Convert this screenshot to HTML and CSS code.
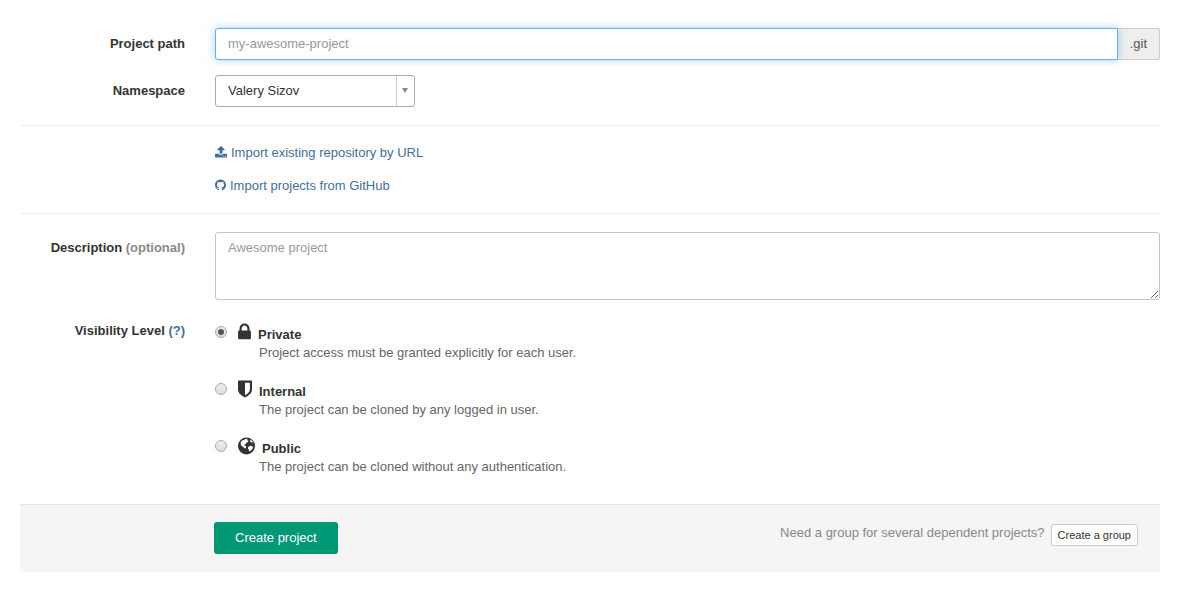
FILE: index.html
```html
<!DOCTYPE html>
<html lang="en">
<head>
<meta charset="utf-8">
<title>New project</title>
<link rel="stylesheet" href="styles.css">
</head>
<body>
<form class="project-form">
  <div class="row">
    <label class="row-label" for="path">Project path</label>
    <div class="input-group">
      <input class="control path-input" id="path" type="text" placeholder="my-awesome-project">
      <span class="addon">.git</span>
    </div>
  </div>
  <div class="row">
    <label class="row-label" for="namespace">Namespace</label>
    <div class="select-wrap">
      <select class="control namespace" id="namespace"><option>Valery Sizov</option></select>
      <span class="select-arrow"></span>
    </div>
  </div>
  <hr class="rule">
  <div class="imports">
    <a class="import-link" href="#url"><svg class="icon-upload" viewBox="64 0 1664 1792" aria-hidden="true"><path d="M1344 1472q0-26-19-45t-45-19-45 19-19 45 19 45 45 19 45-19 19-45zm256 0q0-26-19-45t-45-19-45 19-19 45 19 45 45 19 45-19 19-45zm128-224v320q0 40-28 68t-68 28h-1472q-40 0-68-28t-28-68v-320q0-40 28-68t68-28h427q21 56 70.500 92t110.500 36h256q61 0 110.500-36t70.500-92h427q40 0 68 28t28 68zm-325-648q-17 40-59 40h-256v448q0 26-19 45t-45 19h-256q-26 0-45-19t-19-45v-448h-256q-42 0-59-40-17-39 14-69l448-448q18-19 45-19t45 19l448 448q31 30 14 69z"/></svg>Import existing repository by URL</a>
    <a class="import-link" href="#github"><svg class="icon-github" viewBox="128 0 1536 1792" aria-hidden="true"><path d="M896 128q209 0 385.500 103t279.500 279.500 103 385.500q0 251-146.500 451.500t-378.500 277.500q-27 5-40-7t-13-30q0-3 .5-76.500t.5-134.500q0-97-52-142 57-6 102.500-18t94-39 81-66.500 53-105 20.500-150.500q0-119-79-206 37-91-8-204-28-9-81 11t-92 44l-38 24q-93-26-192-26t-192 26q-16-11-42.500-27t-83.500-38.500-85-13.500q-45 113-8 204-79 87-79 206 0 85 20.500 150t52.500 105 80.500 67 94 39 102.500 18q-39 36-49 103-21 10-45 15t-57 5-65.500-21.500-55.500-62.500q-19-32-48.500-52t-49.500-24l-20-3q-21 0-29 4.500t-5 11.500 9 14 13 12l7 5q22 10 43.500 38t31.500 51l10 23q13 38 44 61.500t67 30 69.500 7 55.500-3.500l23-4q0 38 .5 88.500t.5 54.500q0 18-13 30t-40 7q-232-77-378.500-277.500t-146.500-451.500q0-209 103-385.500t279.500-279.500 385.500-103z"/></svg>Import projects from GitHub</a>
  </div>
  <hr class="rule">
  <div class="row">
    <label class="row-label" for="description">Description <span class="light">(optional)</span></label>
    <textarea class="control description" id="description" placeholder="Awesome project"></textarea>
  </div>
  <div class="row visibility">
    <div class="row-label" id="visibility-label">Visibility Level <a href="#help">(?)</a></div>
    <div class="levels" role="radiogroup" aria-labelledby="visibility-label">
      <div class="level">
        <input class="radio" type="radio" name="level" id="private" checked>
        <label class="level-text" for="private">
          <span class="level-title"><svg class="icon-lock" viewBox="320 0 1152 1792" aria-hidden="true"><path d="M640 768h512v-192q0-106-75-181t-181-75-181 75-75 181v192zm832 96v576q0 40-28 68t-68 28h-960q-40 0-68-28t-28-68v-576q0-40 28-68t68-28h32v-192q0-184 132-316t316-132 316 132 132 316v192h32q40 0 68 28t28 68z"/></svg><strong>Private</strong></span>
          <span class="level-info">Project access must be granted explicitly for each user.</span>
        </label>
      </div>
      <div class="level">
        <input class="radio" type="radio" name="level" id="internal">
        <label class="level-text" for="internal">
          <span class="level-title"><svg class="icon-shield" viewBox="256 0 1280 1792" aria-hidden="true"><path d="M1344 960v-640h-448v1137q119-63 213-137 235-184 235-360zm192-768v768q0 86-33.500 170.500t-83 150-118 127.500-126.500 103-121 77.500-89.500 49.500-42.500 20q-12 6-26 6t-26-6q-16-7-42.500-20t-89.500-49.500-121-77.500-126.500-103-118-127.500-83-150-33.500-170.500v-768q0-26 19-45t45-19h1152q26 0 45 19t19 45z"/></svg><strong>Internal</strong></span>
          <span class="level-info">The project can be cloned by any logged in user.</span>
        </label>
      </div>
      <div class="level">
        <input class="radio" type="radio" name="level" id="public">
        <label class="level-text" for="public">
          <span class="level-title"><svg class="icon-globe" viewBox="0 0 17 20" aria-hidden="true"><circle cx="8.500" cy="10" r="8.500"/><path class="land" d="M2.500 7 3.500 5 5.200 4 7 3.600 8 2.800 9.600 3 9 4.200 10.300 4.600 10.200 6 8.600 6.400 8 7.800 6.600 8.400 6.400 9.500 7.600 9.800 8.200 11.200 7.800 12.500 6 11.800 4.500 10.600 3.200 9.400zM12 3.400 14 4.700 15 6.400 13.400 6.600 12.200 5.400zM10.400 10.800 12.400 9.800 14.200 10.400 15.200 10.200 14.600 12.600 13 14.500 11.200 15.600 10.800 13.600 9.800 12.400z"/></svg><strong>Public</strong></span>
          <span class="level-info">The project can be cloned without any authentication.</span>
        </label>
      </div>
    </div>
  </div>
  <div class="actions">
    <button class="btn-create" type="submit">Create project</button>
    <div class="group-hint">
      <span>Need a group for several dependent projects?</span>
      <button class="btn-group" type="button">Create a group</button>
    </div>
  </div>
</form>
</body>
</html>
```
FILE: styles.css
```css
* { box-sizing: border-box; }
body {
  margin: 0;
  background: #fff;
  color: #333;
  font: 13px/18px "Liberation Sans", Arial, sans-serif;
}
a { color: #446e9b; text-decoration: none; }
svg { fill: currentColor; flex: none; }
.project-form { padding: 28px 25px 26px 20px; }
.row {
  display: grid;
  grid-template-columns: 165px minmax(0, 1fr);
  column-gap: 30px;
  margin-bottom: 15px;
}
.row-label { padding-top: 7px; text-align: right; font-weight: bold; }
.light { color: #888; }
.control {
  height: 32px;
  padding: 6px 12px;
  border: 1px solid #c4c4c4;
  border-radius: 3px;
  background: #fff;
  color: #333;
  font: inherit;
  outline: 0;
}
.control::placeholder { color: #999; }
.input-group { display: flex; }
.path-input {
  flex: 1;
  min-width: 0;
  padding: 5px 12px 7px;
  border-color: #66afe9;
  border-radius: 3px 0 0 3px;
  box-shadow: 0 0 8px rgba(102, 175, 233, 0.6);
  z-index: 1;
}
.addon {
  padding: 6px 12px;
  border: 1px solid #ccc;
  border-left: 0;
  border-radius: 0 3px 3px 0;
  background: #eee;
  color: #555;
}
.select-wrap { display: grid; width: 200px; }
.namespace { grid-area: 1 / 1; width: 100%; padding: 0 12px; border-color: #aaa; appearance: none; }
.select-arrow {
  grid-area: 1 / 1;
  display: flex;
  justify-self: end;
  align-items: center;
  justify-content: center;
  width: 19px;
  margin: 1px 0;
  padding: 0 2px 2px 0;
  border-left: 1px solid #ccc;
  pointer-events: none;
}
.select-arrow::before {
  content: "";
  border: 3px solid transparent;
  border-top: 5px solid #888;
  border-bottom: 0;
}
.rule { margin: 18px 0; border: 0; border-top: 1px solid #eee; }
.imports {
  display: flex;
  flex-direction: column;
  align-items: flex-start;
  gap: 15px;
  margin-left: 195px;
}
.import-link { display: flex; align-items: flex-start; gap: 4px; }
.icon-upload { width: 12px; height: 16px; }
.icon-github { width: 11px; height: 16px; }
.description { display: block; width: 100%; height: 68px; resize: vertical; }
.levels { display: grid; gap: 17px; padding-top: 7px; }
.level { display: flex; gap: 11px; }
.radio {
  appearance: none;
  flex: none;
  display: grid;
  place-items: center;
  width: 12px;
  height: 12px;
  margin: 4px 0 0;
  border: 1px solid #aaa;
  border-radius: 50%;
  background: linear-gradient(#eee, #ddd);
}
.radio:checked::before {
  content: "";
  width: 6px;
  height: 6px;
  border-radius: 50%;
  background: #555;
}
.level-title { display: flex; align-items: flex-start; gap: 7px; height: 22px; }
.level-title strong { padding-top: 4px; }
.icon-lock { width: 13px; height: 20px; }
.icon-shield { width: 14px; height: 20px; }
.icon-globe { width: 17px; height: 20px; }
.land { fill: #fff; }
.level-info { display: block; padding-left: 21px; color: #666; }
.actions {
  display: flex;
  flex-wrap: wrap;
  justify-content: space-between;
  align-items: flex-start;
  margin-top: 28px;
  padding: 17px 22px 18px 194px;
  border-top: 1px solid #e5e5e5;
  background: #f5f5f5;
}
.btn-create {
  height: 32px;
  padding: 0 21px;
  border: 0;
  border-radius: 3px;
  background: #019875;
  color: #fff;
  font: inherit;
}
.group-hint { display: flex; align-items: flex-start; gap: 6px; padding-top: 2px; color: #888; }
.btn-group {
  height: 22px;
  padding: 0 6px;
  border: 1px solid #ccc;
  border-radius: 3px;
  background: #fff;
  color: #333;
  font: 11px/16px "Liberation Sans", Arial, sans-serif;
}
```
